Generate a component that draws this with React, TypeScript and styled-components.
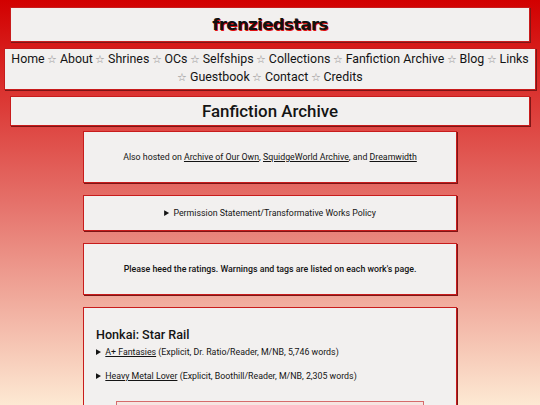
import * as React from 'react'
import styled, { createGlobalStyle } from 'styled-components'

const GlobalStyle = createGlobalStyle`
  html, body {
    margin: 0;
    padding: 0;
  }
  body {
    min-height: 100vh;
    background: linear-gradient(to bottom, #d20000 0%, #e5716a 50%, #fde9d3 100%) fixed;
    font-family: Roboto, 'Liberation Sans', sans-serif;
    color: #141414;
  }
  a {
    color: #141414;
  }
`

const Panel = styled.div`
  background-color: #f2f0ef;
  border: 1px solid #c81c1c;
  box-shadow: 1px 1px 0 #7e1616;
`

const S = {
  Page: styled.div`
    padding: 7px 0 0;
    display: flex;
    flex-direction: column;
    align-items: center;
  `,
  Header: styled(Panel)`
    align-self: stretch;
    margin: 0 10px;
    height: 33px;
    display: flex;
    align-items: center;
    justify-content: center;
    h1 {
      margin: 0;
      font-family: 'DejaVu Sans', sans-serif;
      font-weight: 900;
      font-size: 16.5px;
      letter-spacing: -0.6px;
      color: #111;
      text-shadow: 1px 1px 0 #e01010;
    }
  `,
  Nav: styled(Panel)`
    align-self: stretch;
    margin: 6px 4px 0;
    padding: 2px 2px 3px;
    text-align: center;
    font-size: 12.4px;
    line-height: 16.5px;
    a {
      text-decoration: none;
    }
    span {
      font-size: 10.5px;
      color: #8a8a8a;
    }
  `,
  Title: styled(Panel)`
    align-self: stretch;
    margin: 6px 10px 0;
    height: 28px;
    display: flex;
    align-items: center;
    justify-content: center;
    h2 {
      margin: 0;
      font-size: 16.9px;
      font-weight: 500;
    }
  `,
  Content: styled.main`
    width: 374px;
    margin-top: 5px;
    display: flex;
    flex-direction: column;
    gap: 12px;
  `,
  Box: styled(Panel)<{ $pad: number; $bold?: boolean }>`
    padding: ${p => p.$pad}px 12px;
    text-align: center;
    font-size: 8.8px;
    line-height: 12px;
    font-weight: ${p => (p.$bold ? 500 : 400)};
    summary {
      cursor: pointer;
    }
  `,
  Fandom: styled(Panel)`
    padding: 18px 12px 0;
    font-size: 8.8px;
    line-height: 12px;
    h3 {
      margin: 0 0 2px;
      font-size: 12.6px;
      font-weight: 500;
      line-height: 18px;
    }
  `,
  Work: styled.details`
    margin-bottom: 12px;
    summary {
      cursor: pointer;
    }
  `,
  Nested: styled.div`
    margin: 19px 20px 0;
    height: 20px;
    border: 1px solid #d66b6b;
    border-bottom: none;
    background: #f6e4e1;
  `
}

const pages = ['Home', 'About', 'Shrines', 'OCs', 'Selfships', 'Collections', 'Fanfiction Archive', 'Blog', 'Links', 'Guestbook', 'Contact', 'Credits']

const works = [
  { title: 'A+ Fantasies', info: 'Explicit, Dr. Ratio/Reader, M/NB, 5,746 words' },
  { title: 'Heavy Metal Lover', info: 'Explicit, Boothill/Reader, M/NB, 2,305 words' }
]

export default function App() {
  return (
    <>
      <GlobalStyle />
      <S.Page>
        <S.Header>
          <h1>frenziedstars</h1>
        </S.Header>
        <S.Nav>
          {pages.map((page, i) => (
            <React.Fragment key={page}>
              {i > 0 && <span> ☆ </span>}
              <a href="#">{page}</a>
            </React.Fragment>
          ))}
        </S.Nav>
        <S.Title>
          <h2>Fanfiction Archive</h2>
        </S.Title>
        <S.Content>
          <S.Box $pad={19}>
            Also hosted on <a href="#">Archive of Our Own</a>, <a href="#">SquidgeWorld Archive</a>, and <a href="#">Dreamwidth</a>
          </S.Box>
          <S.Box $pad={11}>
            <details>
              <summary>Permission Statement/Transformative Works Policy</summary>
            </details>
          </S.Box>
          <S.Box $pad={19} $bold>
            Please heed the ratings. Warnings and tags are listed on each work's page.
          </S.Box>
          <S.Fandom>
            <h3>Honkai: Star Rail</h3>
            {works.map(work => (
              <S.Work key={work.title}>
                <summary>
                  <a href="#">{work.title}</a> ({work.info})
                </summary>
              </S.Work>
            ))}
            <S.Nested />
          </S.Fandom>
        </S.Content>
      </S.Page>
    </>
  )
}
